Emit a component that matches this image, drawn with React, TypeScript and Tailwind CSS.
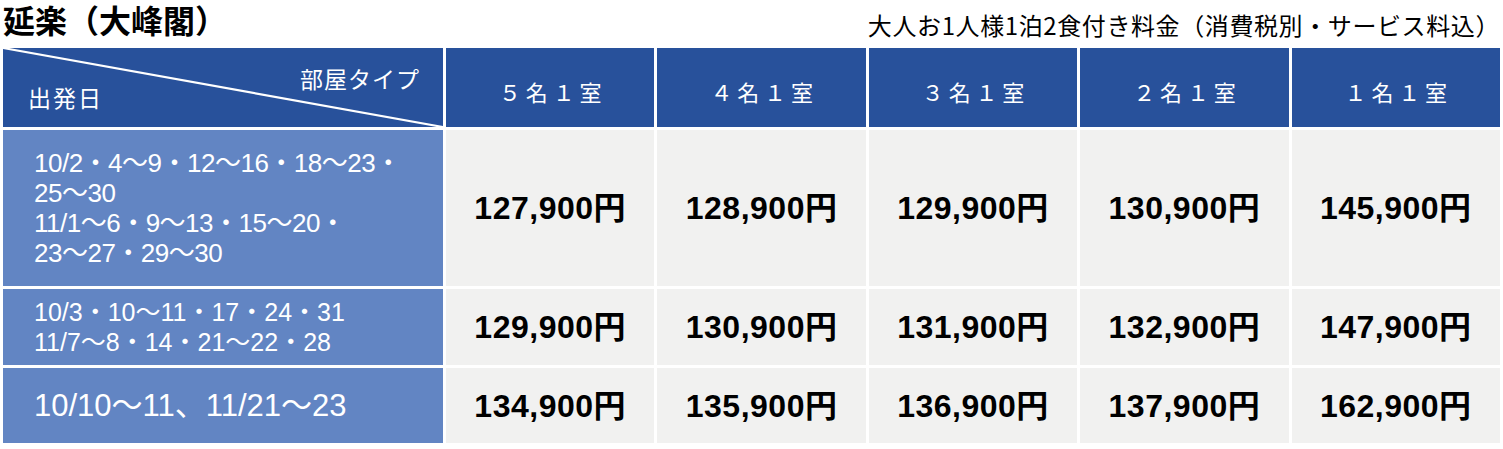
const sans = "font-['Liberation_Sans','Noto_Sans_CJK_JP',sans-serif]";
const jp = "font-['Noto_Sans_CJK_JP',sans-serif]";

const rooms = ["５名１室", "４名１室", "３名１室", "２名１室", "１名１室"];

const rows: { dates: string[]; prices: string[]; h: string; text: string }[] = [
  {
    dates: ["10/2・4～9・12～16・18～23・", "25～30", "11/1～6・9～13・15～20・", "23～27・29～30"],
    prices: ["127,900円", "128,900円", "129,900円", "130,900円", "145,900円"],
    h: "h-[156px]",
    text: "text-[26px] tracking-[-0.5px]",
  },
  {
    dates: ["10/3・10～11・17・24・31", "11/7～8・14・21～22・28"],
    prices: ["129,900円", "130,900円", "131,900円", "132,900円", "147,900円"],
    h: "h-[76px]",
    text: "text-[25px]",
  },
  {
    dates: ["10/10～11、11/21～23"],
    prices: ["134,900円", "135,900円", "136,900円", "137,900円", "162,900円"],
    h: "h-[75px]",
    text: "text-[31px]",
  },
];

export default function App() {
  return (
    <div className="h-[449px] w-[1503px] overflow-hidden bg-white pl-[3px]">
      {/* ── title ─────────────────────────────────────────── */}
      <div className="flex h-[48px] w-[1497px] items-start justify-between">
        <h1 className={`${jp} whitespace-nowrap text-[32px] font-bold leading-[38px] text-black`}>延楽（大峰閣）</h1>
        <p className={`${jp} mt-[8px] whitespace-nowrap text-[24px] leading-[34px] tracking-[0.6px] text-black`}>
          大人お1人様1泊2食付き料金（消費税別・サービス料込）
        </p>
      </div>

      {/* ── table ─────────────────────────────────────────── */}
      <div className="grid w-[1497px] grid-cols-[440px_repeat(5,1fr)] gap-[3px]">
        <div className="relative h-[79px] bg-[#28519b]">
          <svg className="absolute inset-0 h-full w-full" viewBox="0 0 440 79" preserveAspectRatio="none">
            <line x1="0" y1="0" x2="440" y2="79" stroke="white" strokeWidth="2.2" />
          </svg>
          <span className={`${jp} absolute left-[25px] top-[34px] text-[23px] leading-[30px] tracking-[2px] text-white`}>
            出発日
          </span>
          <span className={`${jp} absolute left-[297px] top-[15px] text-[23px] leading-[30px] tracking-[1px] text-white`}>
            部屋タイプ
          </span>
        </div>
        {rooms.map((r) => (
          <div key={r} className="flex h-[79px] items-center justify-center bg-[#28519b] pt-[8px]">
            <span className={`${jp} pl-[5px] text-[22px] tracking-[0.22em] text-white`}>{r}</span>
          </div>
        ))}

        {rows.map((row, i) => (
          <>
            <div key={`d${i}`} className={`flex ${row.h} flex-col justify-center bg-[#6285c3] pl-[31px]`}>
              {row.dates.map((d) => (
                <p key={d} className={`${sans} ${row.text} leading-[30px] text-white`}>
                  {d}
                </p>
              ))}
            </div>
            {row.prices.map((p, j) => (
              <div key={`p${i}-${j}`} className={`flex ${row.h} items-center justify-center bg-[#f1f1f0]`}>
                <span className={`${sans} text-[32px] font-bold tracking-[0.5px] text-black`}>{p}</span>
              </div>
            ))}
          </>
        ))}
      </div>
    </div>
  );
}
